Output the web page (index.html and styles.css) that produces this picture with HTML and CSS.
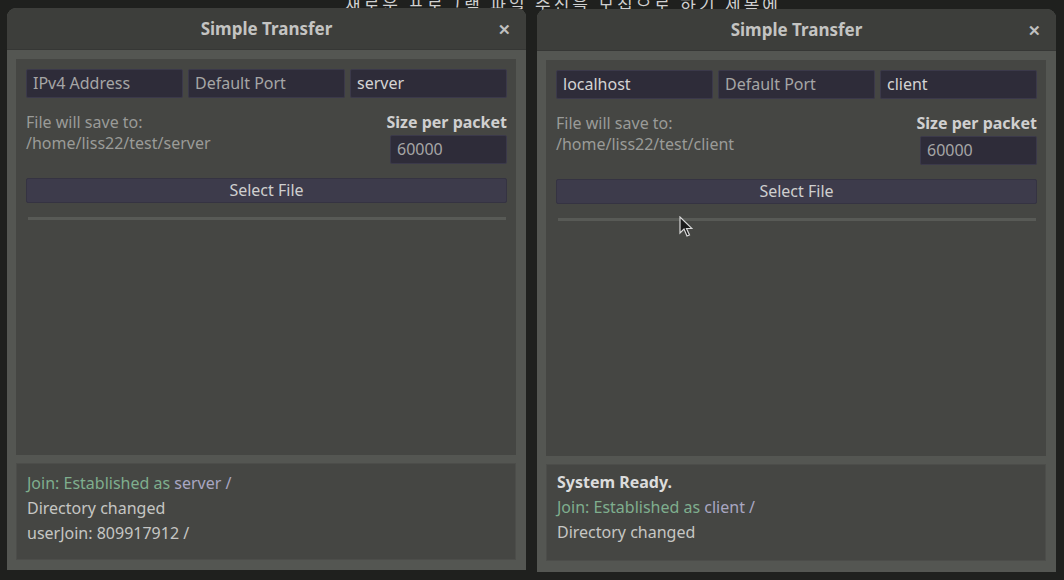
FILE: index.html
```html
<!DOCTYPE html>
<html>
<head>
<meta charset="utf-8">
<link rel="stylesheet" href="styles.css">
</head>
<body>
<div class="bgtext">새로운 프로그램 파일 수신을 모집으로 하기 제목에</div>
<div class="desk">
  <div class="window">
    <div class="titlebar"><span class="title">Simple Transfer</span><span class="close">✕</span></div>
    <div class="frame">
      <div class="panel">
        <div class="inputs">
          <div class="field placeholder">IPv4 Address</div>
          <div class="field placeholder">Default Port</div>
          <div class="field">server</div>
        </div>
        <div class="info">
          <div class="save">
            <div>File will save to:</div>
            <div>/home/liss22/test/server</div>
          </div>
          <div class="packet">
            <div class="plabel">Size per packet</div>
            <div class="field small placeholder">60000</div>
          </div>
        </div>
        <div class="button">Select File</div>
        <div class="sep"></div>
      </div>
      <div class="log">
        <div><span class="green">Join: Established as</span> <span class="purple">server /</span></div>
        <div>Directory changed</div>
        <div>userJoin: 809917912 /</div>
      </div>
    </div>
  </div>
  <div class="window second">
    <div class="titlebar"><span class="title">Simple Transfer</span><span class="close">✕</span></div>
    <div class="frame">
      <div class="panel">
        <div class="inputs">
          <div class="field">localhost</div>
          <div class="field placeholder">Default Port</div>
          <div class="field">client</div>
        </div>
        <div class="info">
          <div class="save">
            <div>File will save to:</div>
            <div>/home/liss22/test/client</div>
          </div>
          <div class="packet">
            <div class="plabel">Size per packet</div>
            <div class="field small placeholder">60000</div>
          </div>
        </div>
        <div class="button">Select File</div>
        <div class="sep"></div>
      </div>
      <div class="log">
        <div class="bright">System Ready.</div>
        <div><span class="green">Join: Established as</span> <span class="purple">client /</span></div>
        <div>Directory changed</div>
      </div>
    </div>
  </div>
</div>
<svg class="cursor" width="14" height="22" viewBox="0 0 14 22"><path d="M1 1 L1 17 L5 13 L8 20 L10.5 19 L7.5 12.5 L13 12.5 Z" fill="#1b1b1b" stroke="#d8d8d8" stroke-width="1.2"/></svg>
</body>
</html>
```
FILE: styles.css
```css
html, body {
  margin: 0;
  padding: 0;
  background: #1f201e;
  width: 1064px;
  height: 580px;
  overflow: hidden;
  font-family: "Noto Sans", "Noto Sans CJK KR", sans-serif;
}
.bgtext {
  position: absolute;
  left: 345px;
  top: -9px;
  font-size: 17px;
  color: #d0d0d0;
  white-space: nowrap;
  letter-spacing: 3px;
}
.desk {
  position: relative;
  display: flex;
  align-items: flex-start;
  gap: 11px;
  padding: 8px 0 0 7px;
}
.window {
  width: 519px;
  height: 562px;
  display: flex;
  flex-direction: column;
  border-radius: 9px 9px 0 0;
  overflow: hidden;
  background: #545652;
}
.window.second {
  margin-top: 1px;
  height: 563px;
}
.second .frame {
  padding-bottom: 11px;
}
.titlebar {
  height: 42px;
  flex: none;
  background: #3d3e3b;
  display: flex;
  align-items: center;
  justify-content: center;
  position: relative;
  border-bottom: 1px solid #363735;
  box-sizing: border-box;
}
.title {
  font-weight: bold;
  font-size: 17px;
  color: #c4c4c2;
}
.close {
  position: absolute;
  right: 15px;
  top: 11px;
  font-size: 15px;
  font-weight: bold;
  color: #c0c0c0;
}
.frame {
  flex: 1;
  display: flex;
  flex-direction: column;
  gap: 8px;
  padding: 9px 10px 10px 9px;
}
.panel {
  flex: 1;
  background: #454643;
  padding: 10px 9px 0 10px;
  display: flex;
  flex-direction: column;
}
.inputs {
  display: flex;
  gap: 5px;
}
.field {
  flex: 1;
  height: 29px;
  box-sizing: border-box;
  background: #2e2c39;
  border: 1px solid #3b394a;
  border-radius: 2px;
  color: #d4d4d4;
  font-size: 16px;
  line-height: 26px;
  padding-left: 6px;
}
.field.placeholder {
  color: #a6a6a6;
}
.info {
  display: flex;
  justify-content: space-between;
  margin-top: 14px;
}
.save {
  color: #9a9b98;
  font-size: 16px;
  line-height: 21px;
}
.packet {
  display: flex;
  flex-direction: column;
  align-items: flex-end;
  gap: 3px;
}
.plabel {
  font-weight: bold;
  font-size: 16px;
  line-height: 20px;
  color: #d0d0d0;
}
.field.small {
  flex: none;
  width: 117px;
}
.button {
  margin-top: 14px;
  height: 25px;
  box-sizing: border-box;
  background: #3d3b4b;
  border: 1px solid #353342;
  border-radius: 2px;
  text-align: center;
  color: #cfcfcf;
  font-size: 16px;
  line-height: 22px;
}
.sep {
  margin: 14px 1px 0 2px;
  height: 3px;
  background: #585a56;
}
.log {
  height: 97px;
  flex: none;
  box-sizing: border-box;
  background: #454643;
  border: 1px solid #4c4d4a;
  padding: 7px 10px;
  font-size: 16px;
  line-height: 25px;
  color: #c6c6c4;
}
.second .log {
  padding-top: 5px;
}
.bright {
  color: #dcdcdc;
  font-weight: bold;
}
.green {
  color: #7fae8e;
}
.purple {
  color: #a9a7c2;
}
.cursor {
  position: absolute;
  left: 679px;
  top: 216px;
}
```
